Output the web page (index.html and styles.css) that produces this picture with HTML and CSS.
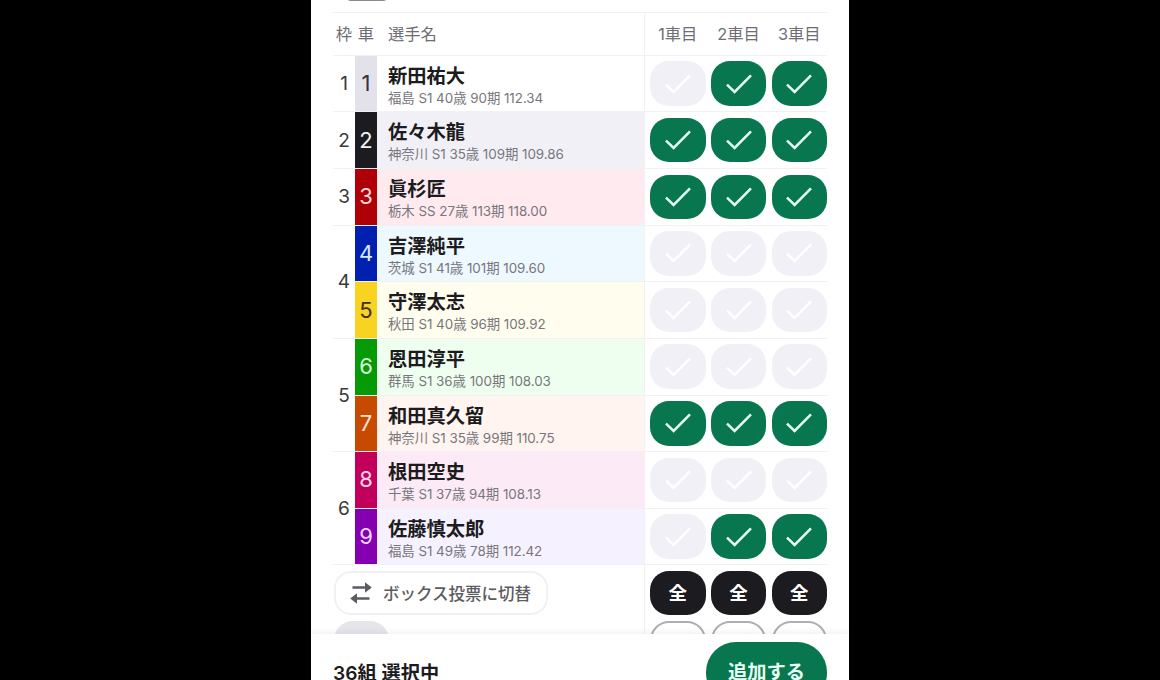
FILE: index.html
```html
<!DOCTYPE html>
<html lang="ja">
<head>
    <meta charset="UTF-8">
    <meta name="viewport" content="width=device-width, initial-scale=1.0">
    <title>投票</title>
    <link rel="stylesheet" href="styles.css">
</head>
<body>
    <svg class="defs">
        <symbol id="check" viewBox="0 0 28 22">
            <path d="M2 11.6 L9.6 19 L26 2.4" />
        </symbol>
    </svg>

    <div class="phone">
        <div class="scroll">
            <div class="prev-row"><span class="prev-tab"></span></div>

            <div class="race-table" id="raceTable">
                <div class="head waku">枠</div>
                <div class="head">車</div>
                <div class="head head-name">選手名</div>
                <div class="head marks">
                    <span>1車目</span>
                    <span>2車目</span>
                    <span>3車目</span>
                </div>
                <!-- Riders will be added here -->
            </div>

            <div class="table-foot">
                <div class="foot-left">
                    <button class="switch">
                        <svg class="swap" viewBox="0 0 22 22">
                            <path class="line" d="M2.5 5.5 H17 M5 16.5 H19.5" />
                            <path class="tip" d="M15 0.2 L21.8 5.5 L15 10.8 Z M7 11.2 L0.2 16.5 L7 21.8 Z" />
                        </svg>
                        ボックス投票に切替
                    </button>
                    <span class="pill ghost"><svg><use href="#check" /></svg></span>
                </div>
                <div class="foot-right">
                    <button class="pill all">全</button>
                    <button class="pill all">全</button>
                    <button class="pill all">全</button>
                    <span class="pill outline"><svg><use href="#check" /></svg></span>
                    <span class="pill outline"><svg><use href="#check" /></svg></span>
                    <span class="pill outline"><svg><use href="#check" /></svg></span>
                </div>
            </div>
        </div>

        <div class="bottom-bar">
            <div class="count">36組 選択中</div>
            <button class="add">追加する</button>
        </div>
    </div>

    <script src="app.js"></script>
</body>
</html>
```
FILE: styles.css
```css
* {
    box-sizing: border-box;
}
body {
    margin: 0;
    height: 680px;
    overflow: hidden;
    background-color: #000;
    color: #1c1b20;
    font-family: Inter, "Noto Sans CJK JP", sans-serif;
}
button {
    padding: 0;
    border: none;
    font-family: inherit;
    cursor: pointer;
}
.defs {
    display: none;
}
.phone {
    display: flex;
    flex-direction: column;
    width: 538px;
    height: 680px;
    margin-left: 311px;
    background-color: #fff;
}
.scroll {
    height: 634px;
    flex: none;
    overflow: hidden;
    padding: 0 22px;
}
.prev-row {
    height: 11.7px;
    padding-left: 12px;
    overflow: hidden;
}
.prev-tab {
    display: block;
    width: 44px;
    height: 12px;
    margin-top: -11px;
    border-radius: 6px;
    background-color: #8a8a8e;
}

/* rider table */
.race-table {
    display: grid;
    grid-template-columns: 22px 22px 267px 183px;
    grid-template-rows: 43px;
    grid-auto-rows: 56.65px;
}
.race-table > div {
    border-top: 1px solid #f1f0f3;
}
.head {
    display: flex;
    align-items: center;
    justify-content: center;
    padding-bottom: 1px;
    color: #6e6d73;
    font-size: 16.3px;
    white-space: nowrap;
}
.head-name {
    justify-content: flex-start;
    padding-left: 11px;
}
.waku {
    display: flex;
    align-items: center;
    justify-content: center;
    font-size: 19px;
    color: #3a393e;
}
.head.waku {
    font-size: 16.3px;
    color: #6e6d73;
}
.car {
    display: flex;
    align-items: center;
    justify-content: center;
    padding-bottom: 1px;
    font-size: 22px;
}
.name {
    padding: 7px 0 0 11px;
    white-space: nowrap;
}
.name b {
    display: block;
    font-size: 19.3px;
    line-height: 27px;
    font-weight: 700;
}
.name small {
    display: block;
    font-size: 13.4px;
    line-height: 17px;
    letter-spacing: -0.04px;
    color: #77767c;
}
.marks {
    display: grid;
    grid-template-columns: repeat(3, 55.5px);
    column-gap: 5.25px;
    align-items: center;
    justify-content: start;
    justify-items: center;
    padding-left: 5px;
    border-left: 1px solid #f1f0f3;
}
.pill {
    display: flex;
    align-items: center;
    justify-content: center;
    width: 55.5px;
    height: 44.5px;
    border-radius: 19px;
    background-color: #f1f0f7;
}
.pill svg {
    width: 28px;
    height: 22px;
    fill: none;
    stroke: #fff;
    stroke-width: 2.5;
}
.pill.on {
    background-color: #08764e;
}
.pill.on svg {
    stroke: #e6fff5;
}

/* frame colours */
.c1 { background-color: #e3e2ea; color: #333238; }
.c2 { background-color: #1c1b20; color: #f1f0f7; }
.c3 { background-color: #af0008; color: #ffd9de; }
.c4 { background-color: #0020b0; color: #d5e8ff; }
.c5 { background-color: #f9d322; color: #3d300a; }
.c6 { background-color: #079a07; color: #d9ffd9; }
.c7 { background-color: #c74a02; color: #ffe3d3; }
.c8 { background-color: #c1005c; color: #ffd5ea; }
.c9 { background-color: #8500b1; color: #f2d8ff; }
.n2 { background-color: #f1f0f7; }
.n3 { background-color: #ffeaf0; }
.n4 { background-color: #eef8ff; }
.n5 { background-color: #fffdee; }
.n6 { background-color: #efffef; }
.n7 { background-color: #fff4f0; }
.n8 { background-color: #fceaf6; }
.n9 { background-color: #f5f1ff; }

/* below the table */
.table-foot {
    display: grid;
    grid-template-columns: 311px 183px;
    height: 120px;
    border-top: 1px solid #f1f0f3;
}
.foot-left {
    display: flex;
    flex-direction: column;
    gap: 6px;
    padding: 6px 0 0 0.5px;
}
.switch {
    display: flex;
    align-items: center;
    gap: 11.5px;
    width: 214px;
    height: 43.5px;
    padding-left: 14px;
    border: 2px solid #f1f0f4;
    border-radius: 17px;
    background-color: #fff;
    color: #5c5b61;
    font-size: 16.5px;
    font-weight: 500;
    white-space: nowrap;
}
.swap {
    width: 22px;
    height: 22px;
    flex: none;
}
.swap .line {
    fill: none;
    stroke: #5c5b61;
    stroke-width: 2.4;
}
.swap .tip {
    fill: #5c5b61;
}
.ghost {
    background-color: #e6e5ec;
}
.foot-right {
    display: grid;
    grid-template-columns: repeat(3, 55.5px);
    gap: 5.25px;
    align-content: start;
    padding: 5.5px 0 0 5px;
    border-left: 1px solid #f1f0f3;
}
.pill.all {
    padding-bottom: 2px;
    background-color: #1c1b20;
    color: #fff;
    font-size: 18.5px;
    font-weight: 700;
}
.pill.outline {
    border: 2.5px solid #aeadb3;
    background-color: #fff;
}
.pill.outline svg {
    stroke: #c9c8ce;
}

.bottom-bar {
    position: relative;
    display: flex;
    justify-content: space-between;
    height: 46px;
    flex: none;
    padding: 0 22px;
    background-color: #fff;
    box-shadow: 0 -2px 6px rgba(60, 40, 80, 0.07);
}
.count {
    padding-top: 26px;
    font-size: 19.2px;
    line-height: 26px;
    font-weight: 600;
}
.add {
    width: 121px;
    height: 61px;
    margin-top: 8px;
    padding-bottom: 3px;
    border-radius: 30px;
    background-color: #08764e;
    color: #e6fff5;
    font-size: 19.3px;
    font-weight: 600;
}
```
FILE: app.js
```js
const riders = [
    { waku: 1, name: '新田祐大', info: '福島 S1 40歳 90期 112.34', marks: [0, 1, 1] },
    { waku: 2, name: '佐々木龍', info: '神奈川 S1 35歳 109期 109.86', marks: [1, 1, 1] },
    { waku: 3, name: '眞杉匠', info: '栃木 SS 27歳 113期 118.00', marks: [1, 1, 1] },
    { waku: 4, span: 2, name: '吉澤純平', info: '茨城 S1 41歳 101期 109.60', marks: [0, 0, 0] },
    { name: '守澤太志', info: '秋田 S1 40歳 96期 109.92', marks: [0, 0, 0] },
    { waku: 5, span: 2, name: '恩田淳平', info: '群馬 S1 36歳 100期 108.03', marks: [0, 0, 0] },
    { name: '和田真久留', info: '神奈川 S1 35歳 99期 110.75', marks: [1, 1, 1] },
    { waku: 6, span: 2, name: '根田空史', info: '千葉 S1 37歳 94期 108.13', marks: [0, 0, 0] },
    { name: '佐藤慎太郎', info: '福島 S1 49歳 78期 112.42', marks: [0, 1, 1] }
];

function renderRiders() {
    const table = document.getElementById('raceTable');

    table.insertAdjacentHTML('beforeend', riders.map((r, i) => `
        ${r.waku ? `<div class="waku" style="grid-row: span ${r.span || 1}">${r.waku}</div>` : ''}
        <div class="car c${i + 1}">${i + 1}</div>
        <div class="name n${i + 1}">
            <b>${r.name}</b>
            <small>${r.info}</small>
        </div>
        <div class="marks">
            ${r.marks.map(on => `
                <span class="pill ${on ? 'on' : ''}"><svg><use href="#check" /></svg></span>
            `).join('')}
        </div>
    `).join(''));
}

renderRiders();
```
